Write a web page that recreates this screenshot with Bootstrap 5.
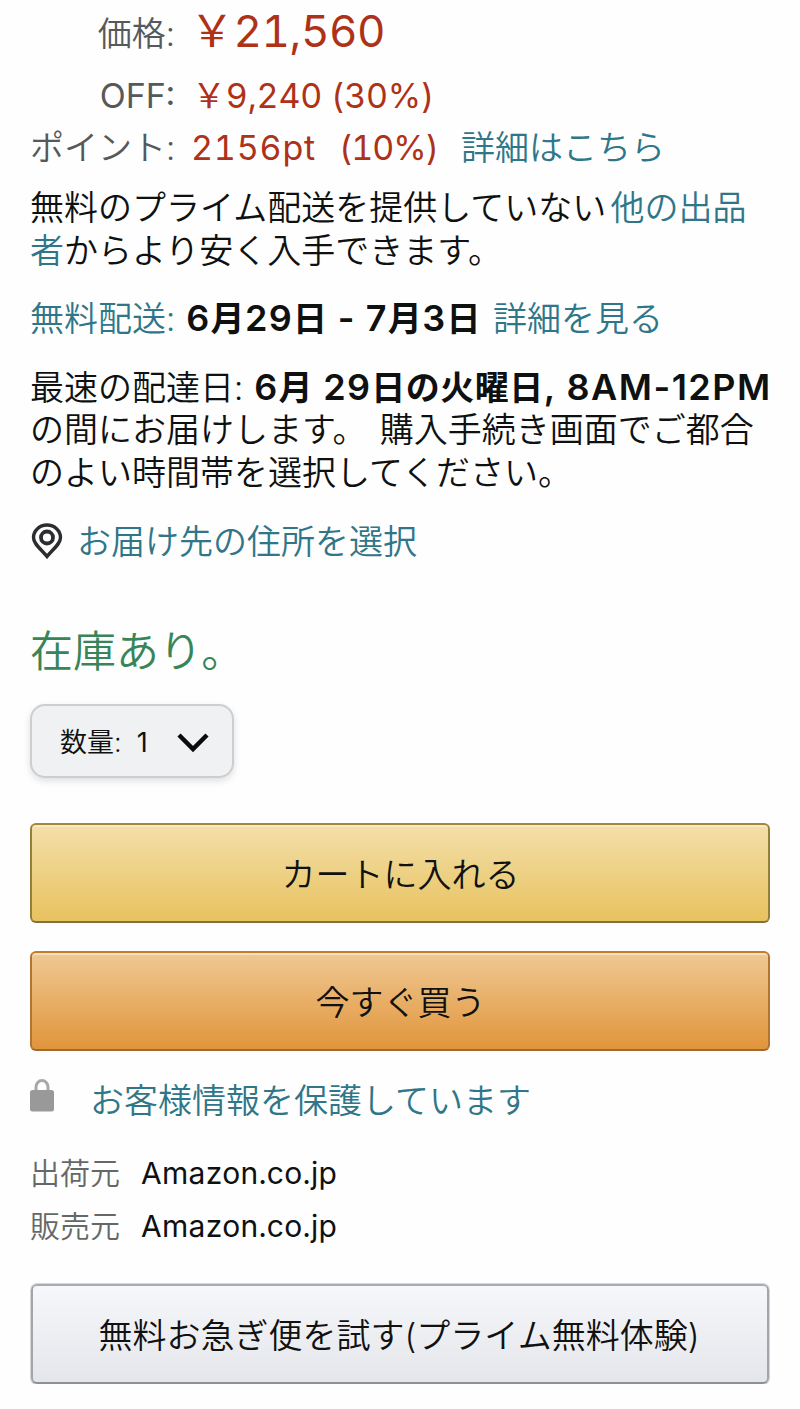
<!DOCTYPE html>
<html lang="ja">
<head>
<meta charset="utf-8">
<meta name="viewport" content="width=device-width, initial-scale=1">
<title>Amazon.co.jp</title>
<link href="https://cdn.jsdelivr.net/npm/bootstrap@5.3.0/dist/css/bootstrap.min.css" rel="stylesheet">
<style>
body{font-family:Inter,"Noto Sans CJK JP",sans-serif;font-size:34px;line-height:42.5px;font-weight:350;color:#0f1111;background:#fefefe;font-feature-settings:"tnum";}
.buybox{padding:13px 30px 0;}
.line{white-space:nowrap;height:42.5px;}
a{color:#2f7689;text-decoration:none;}
.price-row{height:42px;line-height:42px;white-space:nowrap;}
.price-off{margin-top:20px;}
.price-points{margin-top:10px;}
.price-label{width:145px;margin-right:17px;color:#565959;}
.price-off .price-label{font-weight:400;}
.price-points .price-label{width:144px;margin-right:18px;}
.price-value{color:#ad3218;font-weight:400;}
.price-big{font-size:44px;line-height:37px;letter-spacing:-.5px;margin-left:-2px;}
.price-mid{letter-spacing:-.2px;}
.points{letter-spacing:.8px;margin-left:-1px;}
.rate{margin:0 23px 0 23px;letter-spacing:-1px;}
.block-offers{margin-top:18px;}
.block-delivery{margin-top:26px;}
.other-sellers{margin-left:-5px;}
.after-stop{margin-left:4px;}
b{font-weight:600;letter-spacing:.5px;margin-left:2px;font-feature-settings:normal;}
.num{font-size:36px;line-height:1;letter-spacing:1.2px;}
.hours{letter-spacing:1.5px;}
.see-details{margin-left:3px;}
.location{margin-top:27px;}
.location svg{margin-bottom:2px;}
.location span{margin-left:13px;}
.stock{font-size:43px;line-height:44px;color:#388557;margin-top:65px;}
.qty{width:204px;height:74px;margin-top:31px;border:2px solid #cbcfcf;border-radius:15px;background:#eff1f3;box-shadow:0 3px 7px rgba(15,17,17,.13);font-size:27px;font-weight:350;line-height:70px;padding:4px 23px 0 28px;color:#0f1111;}
.qty-value{margin:0 auto 0 15px;font-weight:400;}
.buy{height:100px;border-radius:6px;font-size:34px;font-weight:350;line-height:96px;padding:2px 0 0 1px;color:#111;border:2px solid;}
.buy-cart{margin-top:45px;background:linear-gradient(#f3dfa9,#e7c25f);border-color:#a2863a #95803a #83703a;box-shadow:inset 0 2px #f7e9c5;}
.buy-now{margin-top:28px;background:linear-gradient(#efc893,#e1953b);border-color:#c47b2a #b37431 #a0692f;box-shadow:inset 0 2px #f6dfc2;}
.buy-prime{width:738px;margin:31px 1px 0;padding-left:0;padding-right:2px;background:linear-gradient(#f6f7fa,#e5e6eb);border-color:#a9adb3 #a2a6ab #8d9096;box-shadow:0 0 0 1px #d4d8da;}
.secure{margin-top:28px;}
.secure span{margin-left:36px;padding-top:1px;}
.sellers{padding-top:25px;}
.seller{font-size:30px;line-height:53px;height:53px;}
.seller-label{width:111px;color:#656868;}
.seller-name{letter-spacing:.3px;font-weight:400;}
</style>
</head>
<body>
<main class="buybox">
  <div class="price-row d-flex"><span class="price-label text-end">価格:</span><span class="price-value price-big">￥21,560</span></div>
  <div class="price-row price-off d-flex"><span class="price-label text-end">OFF:</span><span class="price-value price-mid">￥9,240 (30%)</span></div>
  <div class="price-row price-points d-flex"><span class="price-label text-end">ポイント:</span><span class="price-value points">2156pt</span><span class="price-value rate">(10%)</span><a href="#">詳細はこちら</a></div>

  <div class="block-offers">
    <div class="line">無料のプライム配送を提供していない <a href="#" class="other-sellers">他の出品</a></div>
    <div class="line"><a href="#">者</a>からより安く入手できます。</div>
  </div>
  <div class="line block-delivery"><a href="#">無料配送:</a> <b><span class="num">6</span>月<span class="num">29</span>日<span class="num"> - 7</span>月<span class="num">3</span>日</b> <a href="#" class="see-details">詳細を見る</a></div>
  <div class="block-delivery">
    <div class="line">最速の配達日: <b><span class="num">6</span>月<span class="num"> 29</span>日の火曜日<span class="num hours">, 8AM-12PM</span></b></div>
    <div class="line">の間にお届けします。 <span class="after-stop">購入手続き画面でご都合</span></div>
    <div class="line">のよい時間帯を選択してください。</div>
  </div>
  <a href="#" class="location d-flex align-items-center">
    <svg width="34" height="38" viewBox="0 0 34 38" fill="none" stroke="#2b2d2e"><path d="M17 34.500C11 27 3.500 22 3.500 15.500a13.500 12.500 0 0 1 27 0C30.500 22 23 27 17 34.500Z" stroke-width="3.400"/><circle cx="17" cy="15.500" r="6" stroke-width="3.800"/></svg>
    <span>お届け先の住所を選択</span>
  </a>
  <div class="stock">在庫あり。</div>
  <button class="qty btn d-flex align-items-center"><span>数量:</span><span class="qty-value">1</span>
    <svg width="32" height="22" viewBox="0 0 32 22" fill="none" stroke="#0b0b0b" stroke-width="4.500"><path d="M2 3l14 14L30 3"/></svg>
  </button>
  <button class="buy buy-cart btn w-100 d-block">カートに入れる</button>
  <button class="buy buy-now btn w-100 d-block">今すぐ買う</button>
  <a href="#" class="secure d-flex">
    <svg width="24" height="34" viewBox="0 0 24 34"><path d="M6 12V8a6 6.500 0 0 1 12 0v4" fill="none" stroke="#a8a8a8" stroke-width="3"/><rect y="11" width="24" height="21.500" rx="2.500" fill="#999"/></svg>
    <span>お客様情報を保護しています</span>
  </a>
  <div class="sellers">
    <div class="seller d-flex"><span class="seller-label">出荷元</span><span class="seller-name">Amazon.co.jp</span></div>
    <div class="seller d-flex"><span class="seller-label">販売元</span><span class="seller-name">Amazon.co.jp</span></div>
  </div>
  <button class="buy buy-prime btn d-block">無料お急ぎ便を試す(プライム無料体験)</button>
</main>
<script src="https://cdn.jsdelivr.net/npm/bootstrap@5.3.0/dist/js/bootstrap.bundle.min.js"></script>
</body>
</html>
